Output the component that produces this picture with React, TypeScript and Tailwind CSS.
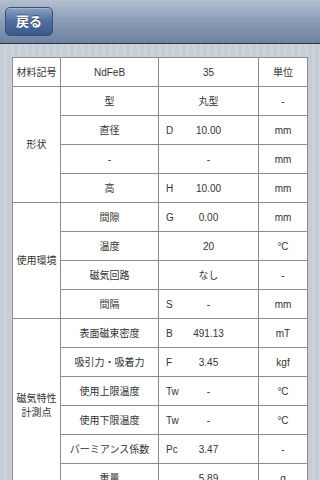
const rows: { name: string; sym: string; value: string; unit: string }[][] = [
  [
    { name: "型", sym: "", value: "丸型", unit: "-" },
    { name: "直径", sym: "D", value: "10.00", unit: "mm" },
    { name: "-", sym: "", value: "-", unit: "mm" },
    { name: "高", sym: "H", value: "10.00", unit: "mm" },
  ],
  [
    { name: "間隙", sym: "G", value: "0.00", unit: "mm" },
    { name: "温度", sym: "", value: "20", unit: "°C" },
    { name: "磁気回路", sym: "", value: "なし", unit: "-" },
    { name: "間隔", sym: "S", value: "-", unit: "mm" },
  ],
  [
    { name: "表面磁束密度", sym: "B", value: "491.13", unit: "mT" },
    { name: "吸引力・吸着力", sym: "F", value: "3.45", unit: "kgf" },
    { name: "使用上限温度", sym: "Tw", value: "-", unit: "°C" },
    { name: "使用下限温度", sym: "Tw", value: "-", unit: "°C" },
    { name: "パーミアンス係数", sym: "Pc", value: "3.47", unit: "-" },
    { name: "重量", sym: "", value: "5.89", unit: "g" },
  ],
];

const groups = [
  { label: ["形状"], span: "row-span-4" },
  { label: ["使用環境"], span: "row-span-4" },
  { label: ["磁気特性", "計測点"], span: "row-span-6" },
];

const cell = "flex items-center justify-center border-r border-b border-[#8c8c8c] bg-white";

export default function App() {
  return (
    <div className="min-h-screen bg-[repeating-linear-gradient(90deg,#c5ccd4_0px,#c5ccd4_4px,#cdd3da_4px,#cdd3da_7px)] font-['Liberation_Sans','Noto_Sans_CJK_JP',sans-serif] text-[10px] text-[#333]">
      <div className="flex h-[44px] items-center border-b border-[#2d3642] bg-gradient-to-b from-[#b4c0d1] via-[#8a9cb6] to-[#6d83a1] px-[5px]">
        <button className="h-[29px] w-[48px] rounded-[5px] border border-[#375075] bg-gradient-to-b from-[#8aa1c3] via-[#4f6d9c] to-[#3a5a8c] text-[13px] font-bold text-white shadow-[inset_0_1px_0_rgba(255,255,255,0.25)] [text-shadow:0_-1px_0_rgba(0,0,0,0.4)]">
          戻る
        </button>
      </div>
      <div className="pt-[13px] pl-[12px]">
        <div className="grid w-[296px] grid-cols-[48px_98px_100px_49px] auto-rows-[29px] border-t border-l border-[#8c8c8c]">
          <div className={cell}>材料記号</div>
          <div className={cell}>NdFeB</div>
          <div className={cell}>35</div>
          <div className={cell}>単位</div>
          {groups.map((g, gi) => [
            <div key={`g${gi}`} className={`${cell} ${g.span} flex-col leading-[14px]`}>
              {g.label.map((l) => (
                <span key={l}>{l}</span>
              ))}
            </div>,
            ...rows[gi].map((r, ri) => [
              <div key={`n${gi}-${ri}`} className={cell}>
                {r.name}
              </div>,
              <div key={`v${gi}-${ri}`} className={`${cell} grid! grid-cols-[1fr_auto_1fr]`}>
                <span className="pl-[7px]">{r.sym}</span>
                <span>{r.value}</span>
                <span />
              </div>,
              <div key={`u${gi}-${ri}`} className={cell}>
                {r.unit}
              </div>,
            ]),
          ])}
        </div>
      </div>
    </div>
  );
}
